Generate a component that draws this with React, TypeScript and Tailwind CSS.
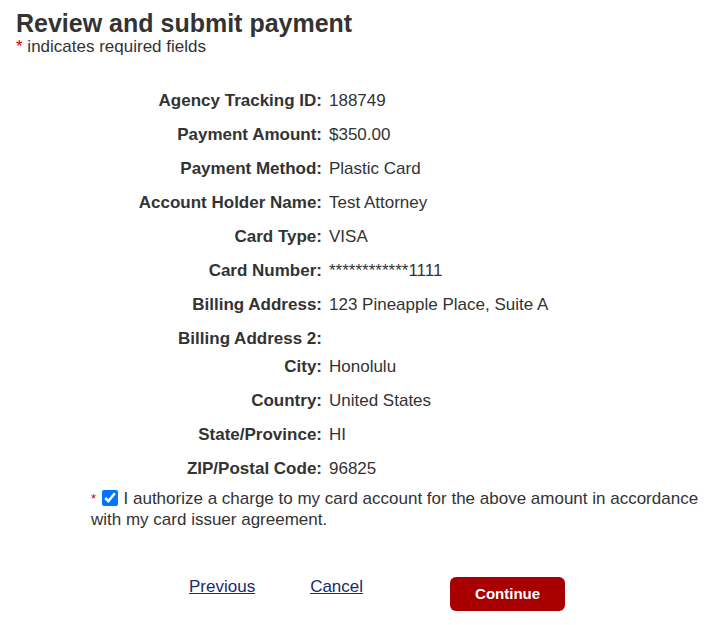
import React from "react";

const rows: { label: string; value: string }[] = [
  { label: "Agency Tracking ID:", value: "188749" },
  { label: "Payment Amount:", value: "$350.00" },
  { label: "Payment Method:", value: "Plastic Card" },
  { label: "Account Holder Name:", value: "Test Attorney" },
  { label: "Card Type:", value: "VISA" },
  { label: "Card Number:", value: "************1111" },
  { label: "Billing Address:", value: "123 Pineapple Place, Suite A" },
  { label: "Billing Address 2:", value: "" },
  { label: "City:", value: "Honolulu" },
  { label: "Country:", value: "United States" },
  { label: "State/Province:", value: "HI" },
  { label: "ZIP/Postal Code:", value: "96825" },
];

export default function App() {
  return (
    <div
      className="w-[712px] h-[625px] bg-white text-[#333333] overflow-hidden"
      style={{ fontFamily: '"Liberation Sans", Arial, sans-serif' }}
    >
      {/* Header */}
      <div className="pl-4 pt-[8px]">
        <h1 className="text-[25px] font-bold leading-[30px]">
          Review and submit payment
        </h1>
        <p className="text-[17px] leading-[18px]">
          <span className="text-[#cc0000]">*</span> indicates required fields
        </p>
      </div>

      {/* Summary rows */}
      <div className="mt-[31px]">
        {rows.map((row, i) => (
          <div key={`row-${i}`} className="flex items-start text-[17px]">
            <div className="w-[322px] text-right font-bold py-[4px] leading-[20px]">
              {row.label}
            </div>
            {row.value ? (
              <div className="pl-[7px] py-[7px] leading-[20px] -mt-[3px] mb-[3px]">
                {row.value}
              </div>
            ) : null}
          </div>
        ))}
      </div>

      {/* Authorization */}
      <div className="pl-[91px] pr-3 -mt-[1px] text-[17px] leading-[21px]">
        <span className="text-[#cc0000] text-[13px] align-top">*</span>{" "}
        <input
          type="checkbox"
          defaultChecked
          className="w-[16px] h-[16px] accent-[#0075ff] align-[-2px] mx-[1px]"
        />{" "}
        I authorize a charge to my card account for the above amount in
        accordance with my card issuer agreement.
      </div>

      {/* Actions */}
      <div className="flex items-center mt-[33px]">
        <a
          href="#"
          className="ml-[189px] text-[17px] text-[#1a2b6b] underline"
        >
          Previous
        </a>
        <a
          href="#"
          className="ml-[55px] text-[17px] text-[#1a2b6b] underline"
        >
          Cancel
        </a>
        <button className="ml-[87px] mt-[14px] w-[115px] h-[34px] rounded-[6px] bg-[#a80000] text-white text-[15px] font-bold">
          Continue
        </button>
      </div>
    </div>
  );
}
